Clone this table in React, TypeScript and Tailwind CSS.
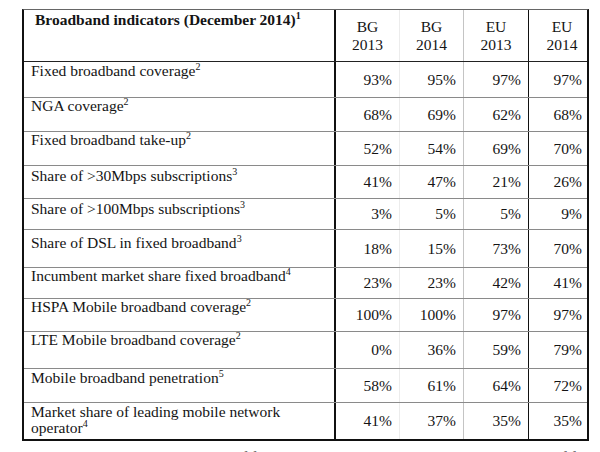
import React from "react";

type Row = {
  label: React.ReactNode;
  sup: string;
  vals: string[];
  h: string;
  pt: string;
};

const rows: Row[] = [
  { label: "Fixed broadband coverage", sup: "2", vals: ["93%", "95%", "97%", "97%"], h: "h-[36px]", pt: "pt-[1px]" },
  { label: "NGA coverage", sup: "2", vals: ["68%", "69%", "62%", "68%"], h: "h-[34px]", pt: "pt-0" },
  { label: "Fixed broadband take-up", sup: "2", vals: ["52%", "54%", "69%", "70%"], h: "h-[34px]", pt: "pt-0" },
  { label: "Share of >30Mbps subscriptions", sup: "3", vals: ["41%", "47%", "21%", "26%"], h: "h-[33px]", pt: "pt-[2px]" },
  { label: "Share of >100Mbps subscriptions", sup: "3", vals: ["3%", "5%", "5%", "9%"], h: "h-[31px]", pt: "pt-[2px]" },
  { label: "Share of DSL in fixed broadband", sup: "3", vals: ["18%", "15%", "73%", "70%"], h: "h-[38px]", pt: "pt-[5px]" },
  { label: "Incumbent market share fixed broadband", sup: "4", vals: ["23%", "23%", "42%", "41%"], h: "h-[31px]", pt: "pt-0" },
  { label: "HSPA Mobile broadband coverage", sup: "2", vals: ["100%", "100%", "97%", "97%"], h: "h-[33px]", pt: "pt-0" },
  { label: "LTE Mobile broadband coverage", sup: "2", vals: ["0%", "36%", "59%", "79%"], h: "h-[37px]", pt: "pt-0" },
  { label: "Mobile broadband penetration", sup: "5", vals: ["58%", "61%", "64%", "72%"], h: "h-[34px]", pt: "pt-[1px]" },
  { label: "Market share of leading mobile network operator", sup: "4", vals: ["41%", "37%", "35%", "35%"], h: "h-[37px]", pt: "pt-[1px]" },
];

const colBorders = [
  "border-l-2 border-[#111]",
  "border-l border-[#ececec]",
  "border-l border-[#c4c4c4]",
  "border-l-[1.5px] border-[#111]",
];

const numPad = ["pr-[7px]", "pr-[7px]", "pr-[7px]", "pr-[5px]"];

const headers = [
  ["BG", "2013"],
  ["BG", "2014"],
  ["EU", "2013"],
  ["EU", "2014"],
];

const headerPad = ["", "", "", "pl-[8px]"];

export default function App() {
  return (
    <div className="w-[600px] h-[452px] overflow-hidden bg-white text-[#141414] font-['Liberation_Serif','Times_New_Roman',serif] text-[15.5px]">
      <div className="ml-[22px] mt-[9px] w-[567px] border-l-2 border-r-2 border-b-2 border-l-[#111] border-r-[#111] border-b-[#111] border-t border-t-[#666]">
        {/* header */}
        <div className="grid grid-cols-[310px_65px_64px_65px_59px] h-[51px]">
          <div className="pl-[11px] leading-[16px] pt-[2px] font-bold">
            Broadband indicators (December 2014)
            <sup className="text-[10px] -top-[6px] font-bold">1</sup>
          </div>
          {headers.map((h, i) => (
            <div
              key={i}
              className={`${colBorders[i]} ${headerPad[i]} text-center leading-[18px] pt-[8px]`}
            >
              <div>{h[0]}</div>
              <div>{h[1]}</div>
            </div>
          ))}
        </div>
        {rows.map((r, idx) => (
          <div
            key={idx}
            className={`grid grid-cols-[310px_65px_64px_65px_59px] ${r.h} border-t ${idx === 0 ? "border-[#222]" : "border-[#8a8a8a]"}`}
          >
            <div className={`pl-[7px] pr-2 leading-[16px] ${r.pt}`}>
              {r.label}
              <sup className="text-[10px] -top-[6px]">{r.sup}</sup>
            </div>
            {r.vals.map((v, i) => (
              <div key={i} className={`${colBorders[i]} ${numPad[i]} flex items-center justify-end`}>
                {v}
              </div>
            ))}
          </div>
        ))}
      </div>
      <div className="mt-[8px] pl-[35px] leading-[16px] text-[#333] whitespace-nowrap">
        Bulgaria has the lowest take-up of fixed broadband in the EU and the highest share of fast lines
      </div>
    </div>
  );
}
